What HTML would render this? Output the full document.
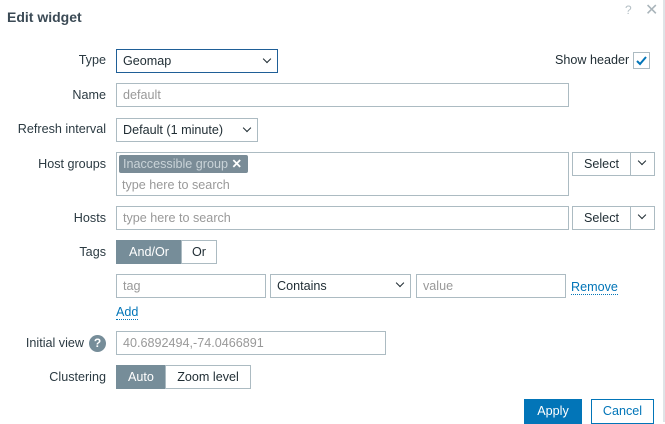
<!DOCTYPE html><html><head><style>
*{box-sizing:border-box;margin:0;padding:0}
body{width:665px;height:422px;background:#fff;font-family:"Liberation Sans",sans-serif;font-size:12.6px;color:#1f2c33;position:relative;overflow:hidden}
.a{position:absolute}
.lbl{position:absolute;right:559px;text-align:right;white-space:nowrap;color:#2b3a42}
.in{position:absolute;border:1px solid #acbbc2;background:#fff;height:24px;padding-left:6px;line-height:22px;white-space:nowrap}
.ph{color:#999}
.chev{position:absolute;width:6px;height:6px;border-right:1.6px solid #1f2c33;border-bottom:1.6px solid #1f2c33;transform:rotate(45deg)}
.seg{position:absolute;height:24px;border:1px solid #acbbc2;line-height:22px;text-align:center}
.on{background:#768d99;color:#fff;border-color:#768d99}
.lnk{position:absolute;color:#0275b8;border-bottom:1px dotted #0275b8;line-height:14px}
</style></head><body>
<div class="a" style="left:7px;top:9px;font-size:14px;font-weight:bold;color:#3b4a55">Edit widget</div>
<div class="a" style="left:625px;top:3px;color:#b5c0c6;font-size:12px">?</div>
<div class="a" style="left:645px;top:0px;color:#a9b4ba;font-size:16px">✕</div>
<div class="a" style="left:663px;top:0;width:2px;height:422px;background:#dfe4e7"></div>

<div class="lbl" style="top:53px">Type</div>
<div class="in" style="left:116px;top:49px;width:162px;border-color:#1f5f97;color:#1f2c33;line-height:22px">Geomap</div>
<div class="chev" style="left:264px;top:56px"></div>
<div class="a" style="left:555px;top:53px">Show header</div>
<div class="a" style="left:633px;top:52px;width:17px;height:17px;border:1px solid #acbbc2"></div>
<svg class="a" style="left:635px;top:54px" width="13" height="13"><path d="M2 7 L5 10 L11 3" fill="none" stroke="#0275b8" stroke-width="2"/></svg>

<div class="lbl" style="top:88px">Name</div>
<div class="in ph" style="left:116px;top:83px;width:453px">default</div>

<div class="lbl" style="top:122px">Refresh interval</div>
<div class="in" style="left:116px;top:118px;width:142px">Default (1 minute)</div>
<div class="chev" style="left:244px;top:125px"></div>

<div class="lbl" style="top:157px">Host groups</div>
<div class="in" style="left:116px;top:152px;width:453px;height:44px"></div>
<div class="a" style="left:119px;top:155px;width:129px;height:18px;background:#7a8c97;border-radius:2px;color:#c9d3d8;padding-left:4px;line-height:18px;white-space:nowrap">Inaccessible group <b style="color:#fff">✕</b></div>
<div class="a ph" style="left:122px;top:178px">type here to search</div>
<div class="seg" style="left:572px;top:152px;width:59px">Select</div>
<div class="seg" style="left:630px;top:152px;width:25px"></div>
<div class="chev" style="left:639px;top:158px"></div>

<div class="lbl" style="top:211px">Hosts</div>
<div class="in ph" style="left:116px;top:206px;width:453px">type here to search</div>
<div class="seg" style="left:572px;top:206px;width:59px">Select</div>
<div class="seg" style="left:630px;top:206px;width:25px"></div>
<div class="chev" style="left:639px;top:212px"></div>

<div class="lbl" style="top:245px">Tags</div>
<div class="seg on" style="left:116px;top:240px;width:66px">And/Or</div>
<div class="seg" style="left:181px;top:240px;width:36px">Or</div>

<div class="in ph" style="left:116px;top:274px;width:150px">tag</div>
<div class="in" style="left:270px;top:274px;width:141px">Contains</div>
<div class="chev" style="left:397px;top:280px"></div>
<div class="in ph" style="left:416px;top:274px;width:150px">value</div>
<div class="lnk" style="left:571px;top:280px">Remove</div>
<div class="lnk" style="left:116px;top:305px">Add</div>

<div class="lbl" style="top:336px;right:581px">Initial view</div>
<div class="a" style="left:89px;top:335px;width:17px;height:17px;border-radius:50%;background:#768d99;color:#fff;font-weight:bold;text-align:center;line-height:17px;font-size:12px">?</div>
<div class="in ph" style="left:116px;top:331px;width:270px">40.6892494,-74.0466891</div>

<div class="lbl" style="top:370px">Clustering</div>
<div class="seg on" style="left:116px;top:365px;width:50px">Auto</div>
<div class="seg" style="left:165px;top:365px;width:86px">Zoom level</div>

<div class="a" style="left:524px;top:399px;width:58px;height:25px;background:#0275b8;color:#fff;text-align:center;line-height:24px">Apply</div>
<div class="a" style="left:591px;top:399px;width:63px;height:25px;border:1px solid #0275b8;color:#0275b8;text-align:center;line-height:22px">Cancel</div>
</body></html>
